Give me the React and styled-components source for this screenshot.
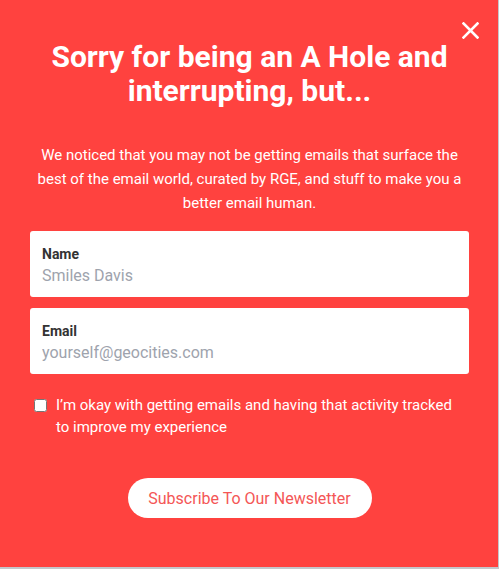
import React from "react";
import styled, { createGlobalStyle } from "styled-components";

const Global = createGlobalStyle`
  html, body { margin: 0; padding: 0; background: #c4c7cb; }
  body { font-family: Roboto, "Liberation Sans", sans-serif; }
  * { box-sizing: border-box; }
`;

const Modal = styled.div`
  position: relative;
  width: 498px;
  height: 567px;
  background: #ff423f;
  padding: 40px 29px 0 30px;
  display: flex;
  flex-direction: column;
  align-items: stretch;
`;

const Close = styled.button`
  position: absolute;
  top: 20px;
  right: 18px;
  width: 20px;
  height: 20px;
  padding: 0;
  border: none;
  background: transparent;
  cursor: pointer;
  display: flex;
  align-items: center;
  justify-content: center;
`;

const Title = styled.h1`
  margin: 0;
  color: #fff;
  font-size: 30px;
  line-height: 34px;
  font-weight: 700;
  text-align: center;
`;

const Intro = styled.p`
  margin: 35px 0 0;
  color: #fff;
  font-size: 15px;
  line-height: 24px;
  text-align: center;
`;

const Field = styled.label`
  display: flex;
  flex-direction: column;
  background: #fff;
  border-radius: 3px;
  height: 66px;
  padding: 15px 12px 0;
  margin-top: ${(p) => p.$mt}px;
`;

const FieldLabel = styled.span`
  font-size: 14px;
  font-weight: 700;
  color: #333;
  line-height: 17px;
`;

const FieldInput = styled.input`
  border: none;
  outline: none;
  padding: 0;
  margin-top: 3px;
  font-family: Roboto, "Liberation Sans", sans-serif;
  font-size: 16px;
  line-height: 20px;
  color: #333;
  background: transparent;
  &::placeholder { color: #9ea3ad; }
`;

const Consent = styled.label`
  display: flex;
  align-items: flex-start;
  gap: 9px;
  margin-top: 20px;
  padding-left: 4px;
  padding-right: 12px;
  color: #fff;
  font-size: 15px;
  line-height: 22px;
`;

const Box = styled.input`
  margin: 5px 0 0;
  width: 13px;
  height: 13px;
  flex: none;
`;

const Submit = styled.button`
  align-self: center;
  margin-top: 40px;
  width: 244px;
  height: 40px;
  border: none;
  border-radius: 20px;
  background: #fff;
  color: #f45656;
  font-family: Roboto, "Liberation Sans", sans-serif;
  font-size: 16px;
  cursor: pointer;
`;

export default function App() {
  return (
    <>
      <Global />
      <Modal>
        <Close aria-label="Close">
          <svg width="17" height="17" viewBox="0 0 17 17">
            <path d="M1.5 1.5 L15.5 15.5 M15.5 1.5 L1.5 15.5" stroke="#fff" strokeWidth="2.6" strokeLinecap="square" />
          </svg>
        </Close>
        <Title>Sorry for being an A Hole and interrupting, but...</Title>
        <Intro>
          We noticed that you may not be getting emails that surface the best of the email world, curated by RGE, and stuff to make you a better email human.
        </Intro>
        <Field $mt={16}>
          <FieldLabel>Name</FieldLabel>
          <FieldInput placeholder="Smiles Davis" />
        </Field>
        <Field $mt={11}>
          <FieldLabel>Email</FieldLabel>
          <FieldInput placeholder="yourself@geocities.com" />
        </Field>
        <Consent>
          <Box type="checkbox" />
          <span>I’m okay with getting emails and having that activity tracked to improve my experience</span>
        </Consent>
        <Submit>Subscribe To Our Newsletter</Submit>
      </Modal>
    </>
  );
}
